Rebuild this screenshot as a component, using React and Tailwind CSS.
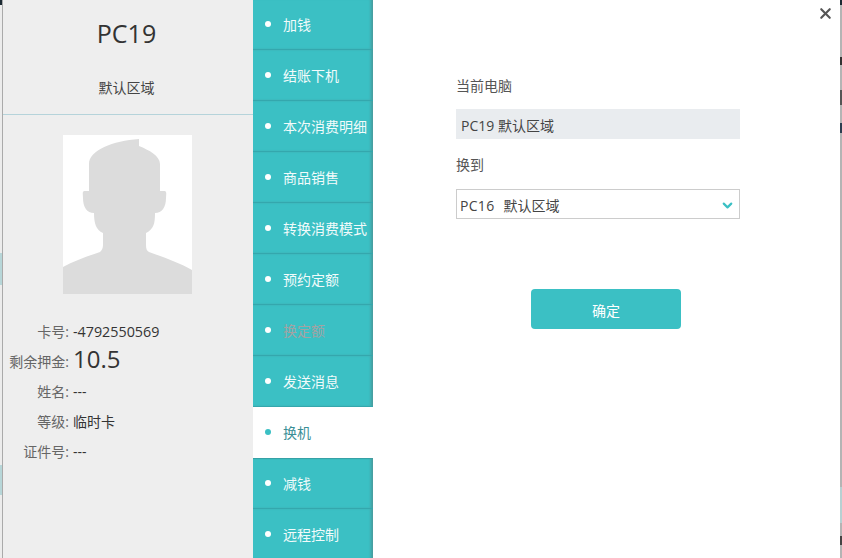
import { X, ChevronDown } from "lucide-react"

const fontStack = "font-['Open_Sans','Noto_Sans_CJK_SC',sans-serif]"

const menuItems = [
  { label: "加钱" },
  { label: "结账下机" },
  { label: "本次消费明细" },
  { label: "商品销售" },
  { label: "转换消费模式" },
  { label: "预约定额" },
  { label: "换定额", disabled: true },
  { label: "发送消息" },
  { label: "换机", active: true },
  { label: "减钱", afterActive: true },
  { label: "远程控制" },
]

const infoRows = [
  { label: "卡号:", value: "-4792550569", cls: "text-[14.3px]" },
  { label: "剩余押金:", value: "10.5", cls: "text-2xl pb-[6px]" },
  { label: "姓名:", value: "---", cls: "text-sm" },
  { label: "等级:", value: "临时卡", cls: "text-sm" },
  { label: "证件号:", value: "---", cls: "text-sm" },
]

const Avatar = () => (
  <svg viewBox="0 0 129 159" className="block w-[129px] h-[159px] bg-white">
    <path
      fill="#dcdcdc"
      d="M76 4 L76 11 C86 15 97 21 97 29 L97 56 L102 56 C104 57 103 60 103 63 C103 72 99 78 92 78 C92 88 91 94 83 98 L83 110 C83 114 84 116 86 117 C100 122 117 128 129 135 L129 159 L0 159 L0 132 C11 126 25 121 37 117 C39 115 40 113 40 110 L40 98 C33 95 31 88 31 78 C24 78 20 72 20 63 C20 60 19 57 21 56 L26 56 L26 29 C26 15 50 6 76 4 Z"
    />
  </svg>
)

const InfoPanel = () => (
  <div className="w-[250px] shrink-0 bg-[#eeeeee] flex flex-col">
    <div className="h-[115px] shrink-0 border-b border-[#b5d3da] flex flex-col items-center pr-[3px]">
      <div className="mt-[15px] text-[25px] leading-9 text-[#333]">PC19</div>
      <div className="mt-[27px] text-sm leading-5 text-[#444]">默认区域</div>
    </div>
    <div className="mt-[20px] flex justify-center pr-[1px]">
      <Avatar />
    </div>
    <div className="mt-[23px] flex flex-col">
      {infoRows.map(row => (
        <div key={row.label} className="flex items-center">
          <div className="w-[66px] text-right text-sm whitespace-nowrap text-[#666]">{row.label}</div>
          <div className={`ml-[4px] h-[30px] flex items-center text-[#333] ${row.cls}`}>{row.value}</div>
        </div>
      ))}
    </div>
  </div>
)

const SideMenu = () => (
  <div className="w-[120px] shrink-0 flex flex-col -mt-[1px]">
    {menuItems.map(item => (
      <div
        key={item.label}
        className={`h-[51px] shrink-0 flex pl-[12px] pt-[17px] text-sm leading-[18px] ${
          item.active
            ? "bg-white text-[#3b8f96]"
            : `bg-[#3bc0c4] border-b border-[#34a7ad] text-[#f2fbfb] ${
                item.afterActive
                  ? "shadow-[inset_-3px_0_3px_-1px_#4a9a9c,inset_0_2px_1px_-1px_#34a0a6]"
                  : "shadow-[inset_-3px_0_3px_-1px_#4a9a9c]"
              }`
        }`}
      >
        <span className={`mt-[5px] w-[6px] h-[6px] rounded-full ${item.active ? "bg-[#3bc0c4]" : "bg-white"}`} />
        <span className={`ml-[12px] whitespace-nowrap ${item.disabled ? "text-[#a3a3a3]" : ""}`}>{item.label}</span>
      </div>
    ))}
  </div>
)

const SwitchForm = () => (
  <div className="relative flex-1 bg-white pl-[83px] pt-[76px]">
    <button className="absolute top-[5px] right-[6px] text-[#555]">
      <X size={17} strokeWidth={3} />
    </button>
    <div className="text-sm leading-[20px] text-[#555]">当前电脑</div>
    <div className="mt-[13px] w-[284px] h-[30px] bg-[#e9ecef] pl-[5px] pt-[4px] flex items-center text-sm text-[#444]">PC19 默认区域</div>
    <div className="mt-[16px] text-sm leading-[20px] text-[#555]">换到</div>
    <div className="mt-[14px] w-[284px] h-[30px] border border-[#cccccc] pl-[3px] pr-[4px] flex items-center justify-between text-sm text-[#444]">
      <span className="pt-[4px] whitespace-pre">
        <span className="tracking-[0.3px]">PC16</span>
        <span className="ml-[9px]">默认区域</span>
      </span>
      <ChevronDown size={15} strokeWidth={3.5} className="mt-[2px] text-[#3bc0c4]" />
    </div>
    <button className="mt-[70px] block ml-[75px] w-[150px] h-[40px] pt-[4px] rounded bg-[#3bc0c4] text-white text-sm">确定</button>
  </div>
)

const LeftEdge = () => (
  <div className="w-[3px] shrink-0 bg-[#ececec] border-r border-[#aaaaaa] flex flex-col">
    <div className="h-[5px] bg-[#1c2a33]" />
    <div className="mt-[248px] h-[32px] bg-[#b7d6d8]" />
    <div className="mt-[180px] h-[30px] bg-[#b7d6d8]" />
  </div>
)

const RightEdge = () => (
  <div className="w-[2px] shrink-0 bg-[#b4b4b4] flex flex-col">
    <div className="h-[5px] bg-[#1c2a33]" />
    <div className="mt-[52px] h-[8px] bg-[#333333]" />
    <div className="mt-[25px] h-[15px] bg-[#555555]" />
    <div className="mt-[18px] h-[10px] bg-[#2c3e50]" />
    <div className="mt-[354px] h-[36px] bg-[#b7d0d2]" />
    <div className="mt-[13px] h-[9px] bg-[#444444]" />
  </div>
)

export default function App() {
  return (
    <div className={`w-[842px] h-[558px] flex overflow-hidden bg-white ${fontStack}`}>
      <LeftEdge />
      <InfoPanel />
      <SideMenu />
      <SwitchForm />
      <RightEdge />
    </div>
  )
}
